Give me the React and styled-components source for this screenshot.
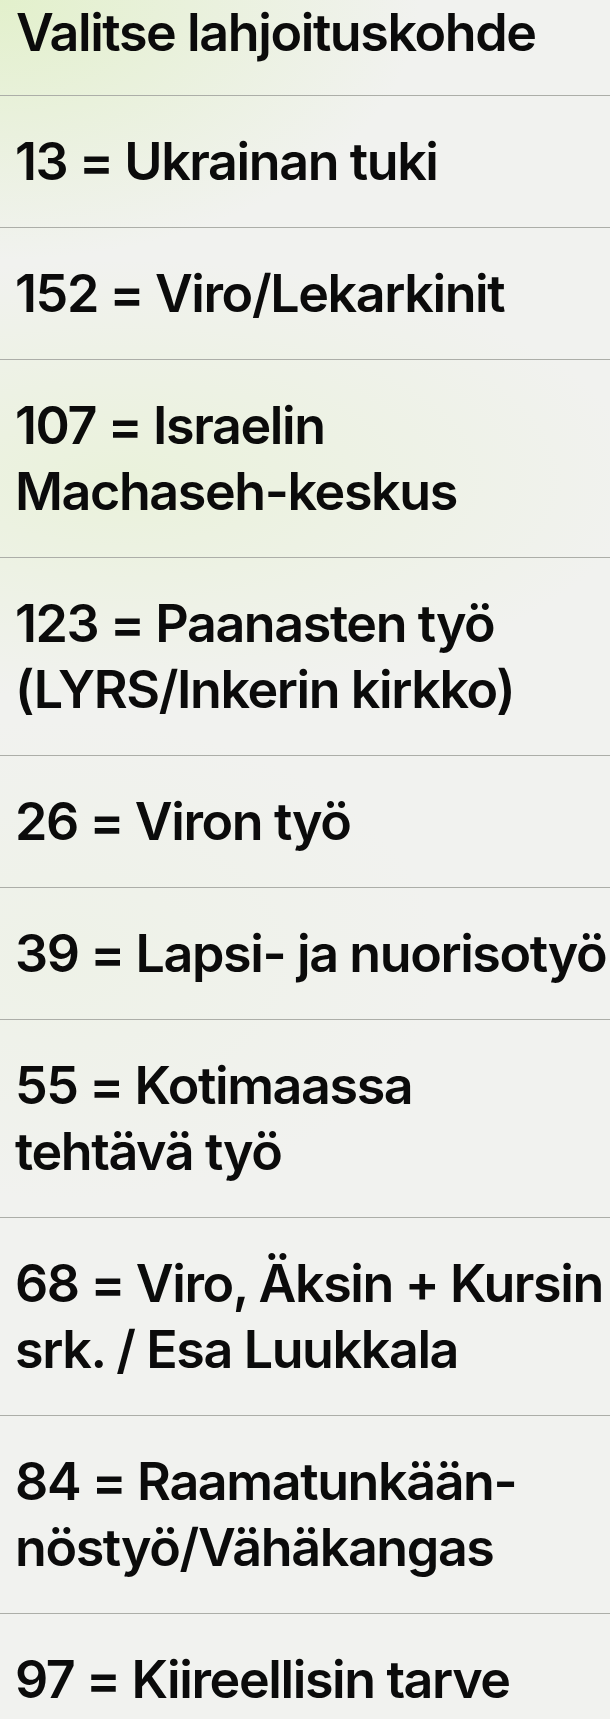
import React from "react";
import styled, { createGlobalStyle } from "styled-components";

const GlobalStyle = createGlobalStyle`
  html, body {
    margin: 0;
    padding: 0;
  }
  body {
    font-family: Inter, "Noto Sans", "Liberation Sans", sans-serif;
    color: #0b0b0b;
    background: #f1f2ef;
  }
`

const Page = styled.div`
  width: 610px;
  min-height: 1719px;
  overflow: hidden;
  background:
    radial-gradient(ellipse 420px 260px at 0px 0px, rgba(225, 240, 200, 0.9), rgba(225, 240, 200, 0) 100%),
    radial-gradient(ellipse 520px 220px at 120px 480px, rgba(232, 242, 214, 0.8), rgba(232, 242, 214, 0) 100%),
    radial-gradient(ellipse 380px 240px at 60px 960px, rgba(236, 242, 226, 0.6), rgba(236, 242, 226, 0) 100%),
    #f1f2ef;
`

const Header = styled.div`
  padding: 0 16px 29px;
  border-bottom: 1px solid #acaea8;
  font-size: 52px;
  line-height: 66px;
  font-weight: 600;
  letter-spacing: -1.4px;
`

const List = styled.ul`
  list-style: none;
  margin: 0;
  padding: 0;
`

const Row = styled.li`
  padding: 33px 0 32px 15px;
  border-bottom: 1px solid #acaea8;
  font-size: 52px;
  line-height: 66px;
  font-weight: 600;
  letter-spacing: -1.4px;
  white-space: nowrap;
`

const Line = styled.span`
  display: block;
`

const items = [
  ["13 = Ukrainan tuki"],
  ["152 = Viro/Lekarkinit"],
  ["107 = Israelin", "Machaseh-keskus"],
  ["123 = Paanasten työ", "(LYRS/Inkerin kirkko)"],
  ["26 = Viron työ"],
  ["39 = Lapsi- ja nuorisotyö"],
  ["55 = Kotimaassa", "tehtävä työ"],
  ["68 = Viro, Äksin + Kursin", "srk. / Esa Luukkala"],
  ["84 = Raamatunkään-", "nöstyö/Vähäkangas"],
  ["97 = Kiireellisin tarve"],
]

export default function App() {
  return (
    <Page>
      <GlobalStyle />
      <Header>Valitse lahjoituskohde</Header>
      <List>
        {items.map((lines) => (
          <Row key={lines[0]}>
            {lines.map((l) => (
              <Line key={l}>{l}</Line>
            ))}
          </Row>
        ))}
      </List>
    </Page>
  );
}
